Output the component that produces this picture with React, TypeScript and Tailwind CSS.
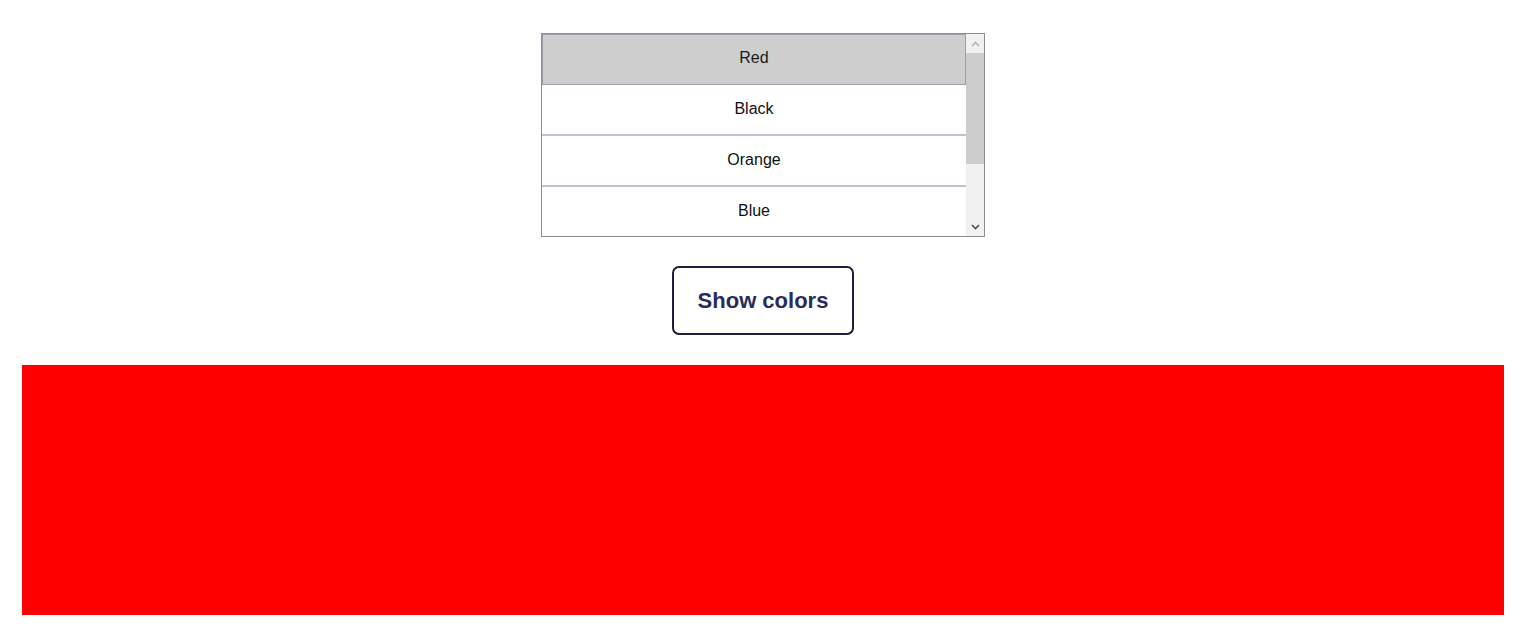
const colors = ["Red", "Black", "Orange", "Blue"];

export default function App() {
  return (
    <div className="min-h-[640px] bg-white pl-[22px] pr-[27px] pt-[33px] font-['Liberation_Sans',Arial,sans-serif]">
      <div className="flex flex-col items-center">
        {/* Color list */}
        <div className="flex h-[204px] w-[444px] overflow-hidden border border-[#8d8d94] bg-white">
          <div className="flex-1 overflow-hidden">
            {colors.map((c, i) => (
              <div
                key={c}
                className={
                  i === 0
                    ? "flex h-[51px] items-center justify-center border border-[#9e9eaa] bg-[#cecece] pb-[3px] text-base text-[#1a1a1a]"
                    : "flex h-[51px] items-center justify-center border-b-2 border-[#c2c0d0] bg-white pb-[2px] text-base text-[#111]"
                }
              >
                {c}
              </div>
            ))}
          </div>

          {/* Scrollbar */}
          <div className="flex w-[18px] flex-col bg-[#f1f1f1]">
            <div className="flex h-[19px] items-center justify-center">
              <svg width="9" height="6" viewBox="0 0 9 6">
                <path d="M1 5 L4.5 1.5 L8 5" fill="none" stroke="#b5b5b5" strokeWidth="1.6" />
              </svg>
            </div>
            <div className="h-[111px] bg-[#cdcdcd]" />
            <div className="flex-1" />
            <div className="flex h-[19px] items-center justify-center">
              <svg width="9" height="6" viewBox="0 0 9 6">
                <path d="M1 1 L4.5 4.5 L8 1" fill="none" stroke="#505050" strokeWidth="1.6" />
              </svg>
            </div>
          </div>
        </div>

        <button className="mt-[29px] rounded-[7px] border-2 border-[#1e1e3c] bg-white px-[24px] py-[19px] text-[22px] leading-[27px] font-bold text-[#2b2b5c]">
          Show colors
        </button>
      </div>

      <div className="mt-[30px] h-[250px] bg-[#ff0000]" />
    </div>
  );
}
